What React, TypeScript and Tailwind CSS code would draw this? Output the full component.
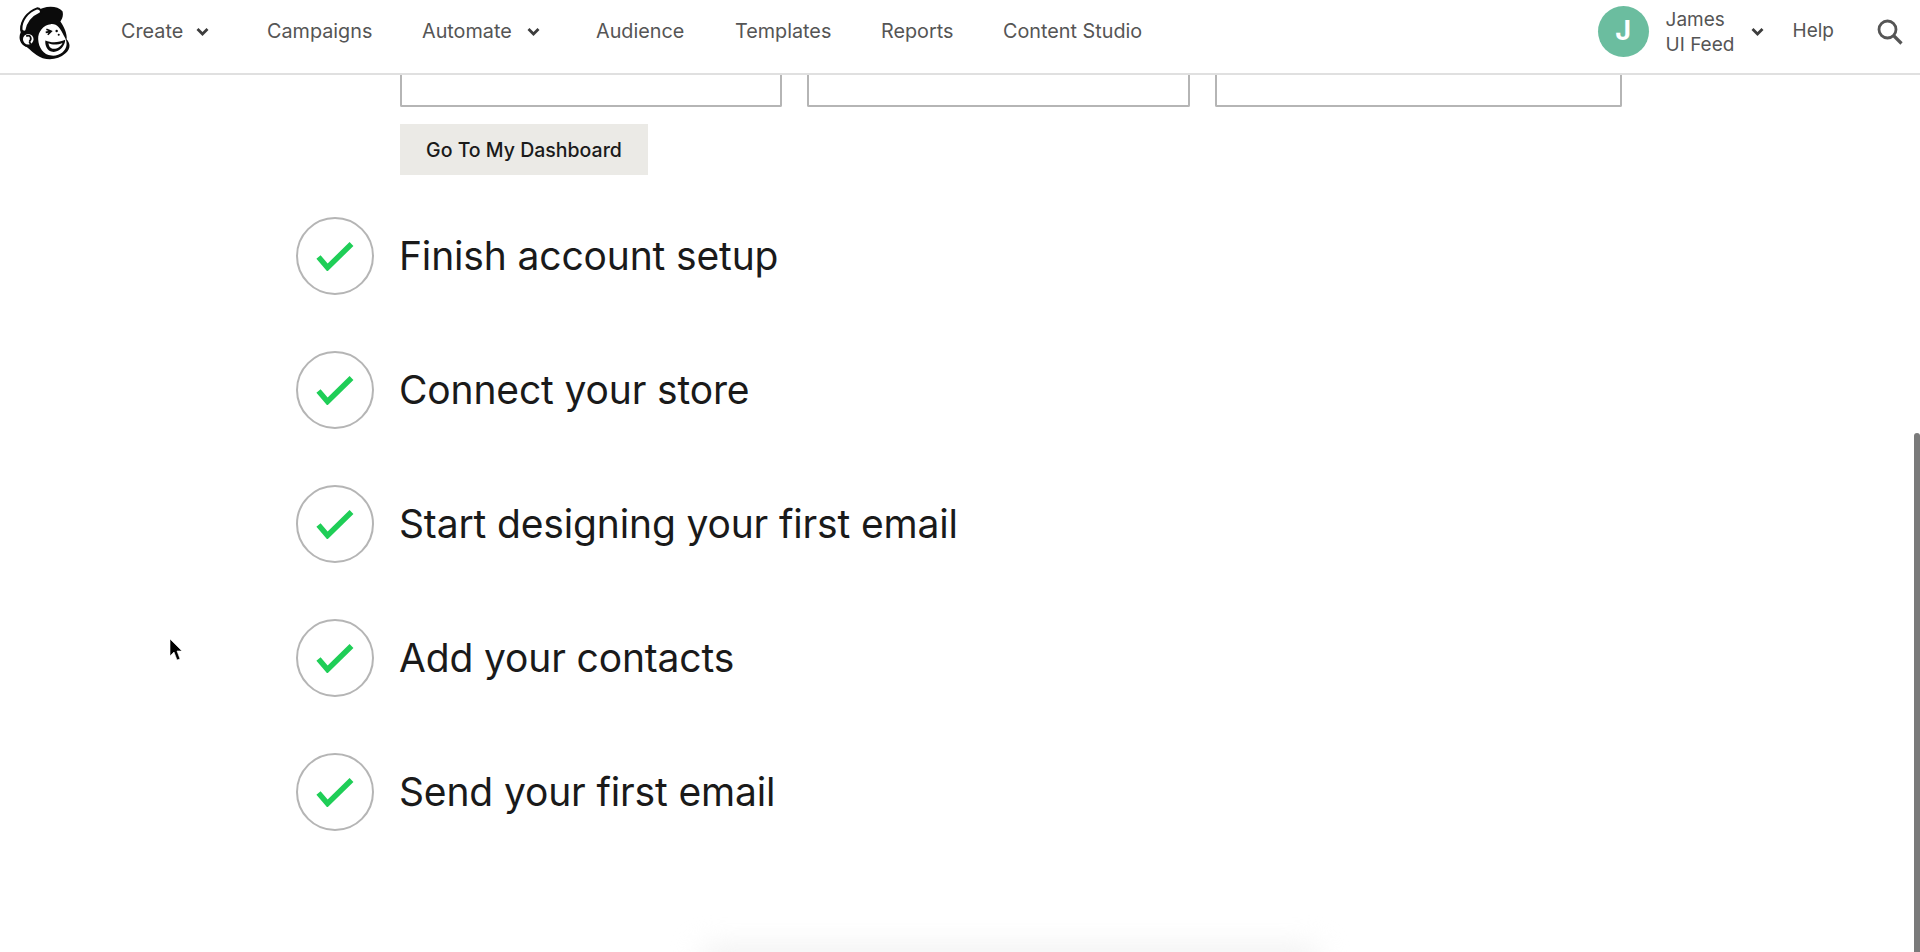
const font = { fontFamily: "Inter, 'Liberation Sans', sans-serif" };

function Chevron({ className }: { className?: string }) {
  return (
    <svg width="13" height="10" viewBox="0 0 13 10" fill="none" className={className}>
      <path d="M1.5 2 L6.5 7 L11.5 2" stroke="#3d3d3d" strokeWidth="2.8" />
    </svg>
  );
}

function Logo() {
  return (
    <svg width="52" height="56" viewBox="54 10 152 162" className="shrink-0">
      <path d="M108 30 C130 14 168 12 184 30 C188 44 182 54 178 60 C192 80 198 100 196 112 C208 124 208 142 192 154 C170 174 132 176 108 158 C92 146 84 138 78 134 C60 128 54 108 62 92 C54 70 76 36 108 30 Z" fill="#0b0b0b" />
      <path d="M64 84 C62 58 82 32 110 22 C118 22 124 30 120 36 C98 46 82 64 78 88 C72 92 66 90 64 84 Z" fill="#fff" stroke="#0b0b0b" strokeWidth="6" />
      <circle cx="84" cy="112" r="19" fill="#fff" stroke="#0b0b0b" strokeWidth="7" />
      <path d="M78 103 C92 98 95 112 87 119 M87 119 L91 127" stroke="#0b0b0b" strokeWidth="5" fill="none" />
      <path d="M113 112 C112 90 128 70 150 68 C168 66 178 82 184 94 C190 106 197 114 196 128 C194 146 176 162 152 160 C128 158 114 136 113 112 Z" fill="#fff" />
      <path d="M135 92 L151 89 M137 83 L151 89 L141 99" stroke="#0b0b0b" strokeWidth="5" fill="none" />
      <circle cx="167" cy="88" r="3.5" fill="#0b0b0b" />
      <circle cx="173" cy="99" r="3" fill="#0b0b0b" />
      <path d="M134 116 C152 124 174 122 192 114 C192 132 174 152 154 149 C140 147 132 130 134 116 Z" fill="#0b0b0b" />
      <path d="M143 124 C156 130 172 128 184 123 C180 134 166 142 155 140 C148 139 144 132 143 124 Z" fill="#fff" />
    </svg>
  );
}

function Check({ label }: { label: string }) {
  return (
    <div className="flex h-[78px] items-center gap-[25px]">
      <div className="flex h-[78px] w-[78px] shrink-0 items-center justify-center rounded-full border-2 border-[#b5b5b5]">
        <svg width="38" height="30" viewBox="0 0 38 30" fill="none">
          <path d="M2.5 16 L11.5 26.5 L35.5 3" stroke="#1fce57" strokeWidth="5.5" />
        </svg>
      </div>
      <span className="text-[39px] leading-[48px] tracking-[-0.15px] text-[#1a1a1a]">{label}</span>
    </div>
  );
}

function NavLink({ children, chevron, className }: { children: string; chevron?: boolean; className: string }) {
  return (
    <a className={`flex items-center ${className}`}>
      {children}
      {chevron && <Chevron />}
    </a>
  );
}

export default function App() {
  return (
    <div style={font} className="relative h-[952px] w-full overflow-hidden bg-white">
      <header className="flex h-[75px] items-center border-b-2 border-[#e0e0e0] pb-[10px] pl-[18px] pr-[17px] text-[19px] text-[#555]">
        <Logo />
        <nav className="ml-[51px] flex items-center text-[19.8px]">
          <NavLink chevron className="w-[146px] gap-[13px]">Create</NavLink>
          <NavLink className="w-[155px]">Campaigns</NavLink>
          <NavLink chevron className="w-[174px] gap-[15px]">Automate</NavLink>
          <NavLink className="w-[139px]">Audience</NavLink>
          <NavLink className="w-[146px]">Templates</NavLink>
          <NavLink className="w-[122px]">Reports</NavLink>
          <NavLink className="">Content Studio</NavLink>
        </nav>
        <div className="ml-auto flex items-center">
          <div className="flex h-[51px] w-[51px] items-center justify-center rounded-full bg-[#6bbd9f] text-[27px] font-bold text-white">J</div>
          <div className="ml-[17px] w-[85px] text-[19px] leading-[25px]">
            <div>James</div>
            <div>UI Feed</div>
          </div>
          <Chevron />
          <span className="ml-[29px]">Help</span>
          <svg width="26" height="26" viewBox="0 0 26 26" fill="none" className="ml-[43px]">
            <circle cx="10.5" cy="10.5" r="8.5" stroke="#555" strokeWidth="2.8" />
            <path d="M16.5 16.5 L24.5 24.5" stroke="#555" strokeWidth="3.2" />
          </svg>
        </div>
      </header>

      <main className="pl-[296px]">
        <div className="ml-[104px]">
          <div className="flex gap-[25px]">
            <div className="h-[32px] w-[382px] rounded-b-[2px] border-2 border-t-0 border-[#b5b5b5]" />
            <div className="h-[32px] w-[383px] rounded-b-[2px] border-2 border-t-0 border-[#b5b5b5]" />
            <div className="h-[32px] w-[407px] rounded-b-[2px] border-2 border-t-0 border-[#b5b5b5]" />
          </div>
          <button className="mt-[17px] flex h-[51px] w-[248px] items-center justify-center bg-[#ebeae6] pt-[2px] text-[19.5px] font-medium text-[#1a1a1a]">
            Go To My Dashboard
          </button>
        </div>
        <div className="mt-[42px] flex flex-col gap-[56px]">
          <Check label="Finish account setup" />
          <Check label="Connect your store" />
          <Check label="Start designing your first email" />
          <Check label="Add your contacts" />
          <Check label="Send your first email" />
        </div>
      </main>

      <div className="absolute bottom-[-16px] left-[700px] h-[20px] w-[620px] rounded-full bg-[#eeeeee] blur-[14px]" />
      <div className="absolute bottom-0 right-0 top-[433px] w-[6px] rounded-t-[3px] bg-[#7a7a7a]" />
      <svg width="14" height="24" viewBox="0 0 14 24" className="absolute left-[169px] top-[638px]">
        <path d="M1 1 L1 18 L5 14 L8 22 L11 21 L8 13 L13 13 Z" fill="#000" stroke="#fff" strokeWidth="0.6" />
      </svg>
    </div>
  );
}
